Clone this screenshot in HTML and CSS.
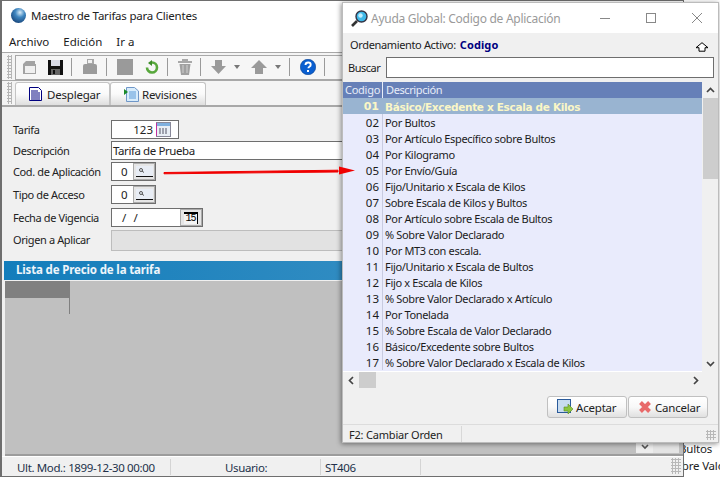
FILE: index.html
```html
<!DOCTYPE html>
<html lang="es">
<head>
<meta charset="utf-8">
<title>Maestro de Tarifas</title>
<link rel="stylesheet" href="styles.css">
</head>
<body>
<div class="desk">
  <div class="behind">
    <div class="behind-line l1">Bultos</div>
    <div class="behind-line l2">Sobre Valor</div>
  </div>

  <section class="main">
    <header class="titlebar">
      <svg class="t-icon" width="17" height="17" viewBox="0 0 17 17"><defs><radialGradient id="g" cx=".6" cy=".3" r=".8"><stop offset="0" stop-color="#d8ecf8"/><stop offset=".4" stop-color="#3f86c0"/><stop offset="1" stop-color="#123c70"/></radialGradient></defs><circle cx="8.500" cy="8.500" r="7.500" fill="url(#g)"/></svg>
      <span class="t-text">Maestro de Tarifas para Clientes</span>
    </header>
    <nav class="menu"><span>Archivo</span><span>Edición</span><span>Ir a</span></nav>

    <div class="toolbar">
      <div class="grip"></div>
      <div class="tools">
        <svg class="ic first" width="15" height="15" viewBox="0 0 15 15"><path d="M1 4 4 1h9v3l1 0v10H1z" fill="#a3a3a3"/><rect x="3" y="6" width="10" height="7" fill="#f0f0f0"/></svg>
        <svg class="ic" width="15" height="15" viewBox="0 0 15 15"><rect width="15" height="15" fill="#111"/><rect x="3" y="0" width="9" height="6" fill="#d9dbe6"/><rect x="3" y="9" width="9" height="6" fill="#666"/><rect x="5" y="10" width="2" height="4" fill="#111"/></svg>
        <i class="sep"></i>
        <svg class="ic" width="16" height="16" viewBox="0 0 16 16"><path d="M5 0h7v6H5z" fill="#a8a8a8"/><path d="M6 1h4v3H6z" fill="#f0f0f0"/><path d="M1 7q0-2 2-2h10q2 0 2 2v8H1z" fill="#9b9b9b"/></svg>
        <i class="sep"></i>
        <svg class="ic" width="16" height="16" viewBox="0 0 16 16"><rect width="16" height="16" fill="#9a9a9a"/></svg>
        <svg class="ic wide" width="14" height="15" viewBox="0 0 14 15"><path d="M7 2.500a5 5 0 1 1-5 5" fill="none" stroke="#58a83c" stroke-width="2.600"/><path d="M7 0v6L3 3z" fill="#3c8c28"/></svg>
        <i class="sep"></i>
        <svg class="ic" width="14" height="16" viewBox="0 0 14 16"><path d="M0 2h14v2H0zM4 0h6v2H4z" fill="#a8a8a8"/><path d="M1.500 5h11L11 16H3z" fill="#a0a0a0"/><path d="M5 6v8M9 6v8" stroke="#d0d0d0"/></svg>
        <i class="sep"></i>
        <svg class="ic" width="15" height="14" viewBox="0 0 15 14"><path d="M4 0h7v6h4l-7.500 8L0 6h4z" fill="#9a9a9a"/></svg>
        <svg class="caret" width="6" height="4" viewBox="0 0 6 4"><path d="M0 0h6L3 4z" fill="#777"/></svg>
        <svg class="ic" width="16" height="14" viewBox="0 0 16 14"><path d="M8 0l8 8h-4v6H4V8H0z" fill="#9a9a9a"/></svg>
        <svg class="caret" width="6" height="4" viewBox="0 0 6 4"><path d="M0 0h6L3 4z" fill="#777"/></svg>
        <i class="sep"></i>
        <svg class="ic" width="16" height="16" viewBox="0 0 16 16"><circle cx="8" cy="8" r="7.700" fill="#0a5fd0" stroke="#073f90" stroke-width=".6"/><path d="M5.500 6q0-2.500 2.700-2.500 2.500 0 2.500 2.200 0 1.300-1.300 2-1 .6-1 1.600" fill="none" stroke="#fff" stroke-width="1.900"/><rect x="7" y="11" width="2" height="2" fill="#fff"/></svg>
        <i class="sep"></i>
      </div>
    </div>

    <div class="tabs">
      <div class="grip short"></div>
      <button class="tab first-tab">
        <svg width="13" height="14" viewBox="0 0 13 14"><path d="M.5.500h9l3 3v10H.500z" fill="#fff" stroke="#000080"/><path d="M2 4h7M2 6h9M2 8h9M2 10h9M2 12h9" stroke="#000080"/></svg>
        <span>Desplegar</span>
      </button>
      <button class="tab second-tab">
        <svg width="15" height="15" viewBox="0 0 15 15"><path d="M2.500.500h8l4 3.500v10.500h-12z" fill="#d8ecfb" stroke="#6f97c8"/><path d="M5 5h7M5 7h7M5 9h7M5 11h7" stroke="#5b9ad8"/><path d="M0 2l4 3-4 3z" fill="#1a8a2a"/></svg>
        <span>Revisiones</span>
      </button>
    </div>

    <div class="content">
      <form class="form">
        <label>Tarifa</label>
        <div class="field w-tarifa num"><span class="val">123</span>
          <svg class="cal" width="16" height="15" viewBox="0 0 16 15"><rect x=".5" y=".5" width="14" height="14" fill="#e8eef5" stroke="#889"/><rect x="1" y="1" width="13" height="3" fill="#7fb0df"/><path d="M3 7h2m1 0h2m1 0h2M3 9h2m1 0h2m1 0h2M3 11h2m1 0h2m1 0h2" stroke="#556"/><rect x="0" y="1" width="1" height="13" fill="#c030a0"/></svg>
        </div>
        <label>Descripción</label>
        <div class="field w-full"><span class="val">Tarifa de Prueba</span></div>
        <label>Cod. de Aplicación</label>
        <div class="field w-code"><span class="val code">0</span><span class="lookup"><svg width="17" height="11" viewBox="0 0 17 11"><rect width="17" height="10" fill="#e8edf5"/><circle cx="5" cy="4" r="1.500" fill="none" stroke="#555"/><path d="M6 5l2 1.500" stroke="#555"/><path d="M0 10.500h17" stroke="#111"/></svg></span></div>
        <label>Tipo de Acceso</label>
        <div class="field w-code"><span class="val code">0</span><span class="lookup"><svg width="17" height="11" viewBox="0 0 17 11"><rect width="17" height="10" fill="#e8edf5"/><circle cx="5" cy="4" r="1.500" fill="none" stroke="#555"/><path d="M6 5l2 1.500" stroke="#555"/><path d="M0 10.500h17" stroke="#111"/></svg></span></div>
        <label>Fecha de Vigencia</label>
        <div class="field w-date"><span class="val date">/ /</span><span class="lookup small"><span class="cal15">15</span></span></div>
        <label>Origen a Aplicar</label>
        <div class="field w-full off"></div>
      </form>

      <div class="list-head">Lista de Precio de la tarifa</div>
      <div class="list-body">
        <div class="grid-corner"></div>
        <div class="grid-line"></div>
        <div class="grid-scroll"><span class="scroll-btn"><svg width="8" height="6" viewBox="0 0 8 6"><path d="M1 1l3 3 3-3" fill="none" stroke="#555" stroke-width="1.600"/></svg></span><span class="scroll-rest"></span></div>
      </div>
    </div>

    <footer class="status">
      <span class="s1">Ult. Mod.: 1899-12-30 00:00</span>
      <span class="s2">Usuario:</span>
      <span class="s3">ST406</span>
      <span class="s4"></span>
      <span class="sizer"></span>
    </footer>
  </section>

  <section class="dialog">
    <header class="d-title">
      <svg width="17" height="17" viewBox="0 0 17 17"><path d="M6 11l-5 5" stroke="#333" stroke-width="2.600"/><circle cx="10.500" cy="6.500" r="5.500" fill="#3fb8e8" stroke="#334" stroke-width="1.400"/><circle cx="9.500" cy="5.500" r="2.200" fill="#bfeeff"/></svg>
      <span class="d-name">Ayuda Global: Codigo de Aplicación</span>
      <div class="d-win">
        <svg width="10" height="10" viewBox="0 0 10 10"><path d="M0 5.500h10" stroke="#888"/></svg>
        <svg width="10" height="10" viewBox="0 0 10 10"><rect x=".5" y=".5" width="9" height="9" fill="none" stroke="#888"/></svg>
        <svg width="10" height="10" viewBox="0 0 10 10"><path d="M0 0l10 10M10 0L0 10" stroke="#888"/></svg>
      </div>
    </header>
    <div class="d-sort">
      <span>Ordenamiento Activo:</span><b>Codigo</b>
      <svg class="sort-up" width="14" height="10" viewBox="0 0 14 10"><path d="M7 .7l6 5H10v3.500H4V5.700H1z" fill="#fff" stroke="#000"/></svg>
    </div>
    <div class="d-search"><label>Buscar</label><div class="d-input"></div></div>
    <div class="d-grid">
      <div class="table">
        <div class="thead"><span class="c1">Codigo</span><span class="c2">Descripción</span></div>
        <div class="row sel"><span class="c1">01</span><span class="c2">Básico/Excedente x Escala de Kilos</span></div>
        <div class="row"><span class="c1">02</span><span class="c2">Por Bultos</span></div>
        <div class="row"><span class="c1">03</span><span class="c2">Por Artículo Específico sobre Bultos</span></div>
        <div class="row"><span class="c1">04</span><span class="c2">Por Kilogramo</span></div>
        <div class="row"><span class="c1">05</span><span class="c2">Por Envío/Guía</span></div>
        <div class="row"><span class="c1">06</span><span class="c2">Fijo/Unitario x Escala de Kilos</span></div>
        <div class="row"><span class="c1">07</span><span class="c2">Sobre Escala de Kilos y Bultos</span></div>
        <div class="row"><span class="c1">08</span><span class="c2">Por Artículo sobre Escala de Bultos</span></div>
        <div class="row"><span class="c1">09</span><span class="c2">% Sobre Valor Declarado</span></div>
        <div class="row"><span class="c1">10</span><span class="c2">Por MT3 con escala.</span></div>
        <div class="row"><span class="c1">11</span><span class="c2">Fijo/Unitario x Escala de Bultos</span></div>
        <div class="row"><span class="c1">12</span><span class="c2">Fijo x Escala de Kilos</span></div>
        <div class="row"><span class="c1">13</span><span class="c2">% Sobre Valor Declarado x Artículo</span></div>
        <div class="row"><span class="c1">14</span><span class="c2">Por Tonelada</span></div>
        <div class="row"><span class="c1">15</span><span class="c2">% Sobre Escala de Valor Declarado</span></div>
        <div class="row"><span class="c1">16</span><span class="c2">Básico/Excedente sobre Bultos</span></div>
        <div class="row"><span class="c1">17</span><span class="c2">% Sobre Valor Declarado x Escala de Kilos</span></div>
      </div>
      <div class="vscroll">
        <span class="v-arrow"><svg width="9" height="6" viewBox="0 0 9 6"><path d="M1 5l3.500-3.500L8 5" fill="none" stroke="#444" stroke-width="1.700"/></svg></span>
        <span class="v-thumb"></span>
        <span class="v-arrow end"><svg width="9" height="6" viewBox="0 0 9 6"><path d="M1 1l3.500 3.500L8 1" fill="none" stroke="#444" stroke-width="1.700"/></svg></span>
      </div>
    </div>
    <div class="hscroll">
      <svg width="6" height="9" viewBox="0 0 6 9"><path d="M5 1L1.500 4.500 5 8" fill="none" stroke="#444" stroke-width="1.700"/></svg>
      <span class="h-thumb"></span>
      <svg class="h-end" width="6" height="9" viewBox="0 0 6 9"><path d="M1 1l3.500 3.500L1 8" fill="none" stroke="#444" stroke-width="1.700"/></svg>
    </div>
    <div class="d-actions">
      <button class="d-btn">
        <svg width="16" height="16" viewBox="0 0 16 16"><rect x=".5" y=".5" width="13" height="13" fill="#c8dcf0" stroke="#2a5a9a"/><path d="M7 8h4V5l5 5-5 5v-3H7z" fill="#8cc63f" stroke="#5a8a20" stroke-width=".6"/></svg>
        <span>Aceptar</span>
      </button>
      <button class="d-btn">
        <svg width="14" height="14" viewBox="0 0 14 14"><path d="M2.500 2.500l9 9M11.500 2.500l-9 9" stroke="#e86a6a" stroke-width="4"/></svg>
        <span>Cancelar</span>
      </button>
    </div>
    <footer class="d-status"><span class="ds1">F2: Cambiar Orden</span><span class="sizer"></span></footer>
  </section>

  <svg class="arrow" width="196" height="12" viewBox="0 0 196 12"><path d="M1 7.500 175 5.200v1.800L1 8.800z" fill="#f00000" stroke="#f00000" stroke-linejoin="round"/><path d="M176 1.500l16 4-16 4z" fill="#f00000"/></svg>
</div>
</body>
</html>
```

FILE: styles.css
```css
* { box-sizing: border-box; }
html, body { margin: 0; padding: 0; }
body { width: 720px; height: 477px; overflow: hidden; font-family: "Noto Sans", "Open Sans", sans-serif; font-size: 11px; color: #1b1b1b; }
.desk { position: relative; width: 720px; height: 477px; overflow: hidden; background: #fff; }

.behind-line { position: absolute; font-size: 11.500px; letter-spacing: -.2px; white-space: nowrap; color: #222; }
.l1 { left: 679px; top: 441px; }
.l2 { left: 669px; top: 458px; }

.main { position: absolute; left: 0; top: 0; width: 684px; height: 477px; display: flex; flex-direction: column; background: #f0f0f0; border: 1px solid #6e6e6e; border-width: 1px 1px 1px 2px; }
.titlebar { height: 29px; display: flex; align-items: center; gap: 4px; padding-left: 8px; background: #fff; font-size: 11.500px; letter-spacing: -.22px; }
.t-text { color: #222; }
.menu { height: 22px; display: flex; align-items: center; gap: 14px; padding-left: 7px; background: #fff; font-size: 11.500px; }

.toolbar { height: 29px; display: flex; align-items: center; border-top: 1px solid #a8a8a8; border-bottom: 1px solid #a8a8a8; padding-left: 5px; padding-top: 1px; background: #f4f4f4; }
.grip { width: 5px; height: 24px; margin-right: 3px; background-image: radial-gradient(#b5b5b5 1px, transparent 1.200px); background-size: 3px 3px; }
.grip.short { height: 22px; }
.tools { flex: 1; height: 25px; display: flex; align-items: center; border: 1px solid #a8a8a8; border-right: 0; background: #f6f6f6; }
.ic { margin-left: 11px; flex: none; }
.ic.first { margin-left: 6px; }
.ic.wide { margin-left: 12px; }
.sep + .ic { margin-left: 10.500px; }
.caret { margin-left: 8px; flex: none; }
.sep { width: 1px; height: 18px; margin-left: 7.500px; background: #9a9a9a; flex: none; }

.tabs { height: 26px; display: flex; align-items: flex-end; padding-left: 5px; border-bottom: 2px solid #a8a8a8; background: #f4f4f4; }
.tabs .grip { margin-right: 3px; align-self: center; }
.tab { height: 23px; display: flex; align-items: center; gap: 5px; padding: 0; font: inherit; font-size: 11.500px; letter-spacing: -.2px; color: #222; border: 1px solid #c4c4c4; border-bottom: 0; border-radius: 3px 3px 0 0; background: linear-gradient(#fff, #fafafa 50%, #dedede); }
.first-tab { width: 95px; padding-left: 13px; }
.second-tab { width: 96px; padding-left: 13px; gap: 3px; margin-left: 0; }

.content { flex: 1; min-height: 0; display: flex; flex-direction: column; }
.form { display: grid; grid-template-columns: 98px 1fr; grid-template-rows: 21px 21px 23px 23px 22px 22px; padding: 13px 0 0 11px; font-size: 11px; letter-spacing: -.38px; }
.form label { align-self: start; padding-top: 2px; color: #222; white-space: nowrap; }
.field { height: 19px; display: flex; align-items: center; background: #fff; border: 1px solid #6e6e6e; }
.w-tarifa { width: 68px; }
.w-full { width: 560px; }
.w-code { width: 45px; }
.w-date { width: 92px; }
.off { height: 21px; background: #e2e2e2; border-color: #bdbdbd; }
.val { padding-left: 1px; font-size: 11.500px; letter-spacing: -.42px; color: #222; }
.num .val { width: 41px; text-align: right; letter-spacing: 0; }
.cal { margin-left: 3px; }
.code { width: 21px; padding-left: 9px; }
.date { width: 68px; padding-left: 10px; word-spacing: 5px; }
.lookup { width: 22px; height: 17px; margin-left: auto; display: flex; align-items: center; justify-content: center; background: #e6e6e6; border: 1px solid #ababab; }
.lookup.small { width: 22px; height: 17px; }
.cal15 { width: 14px; height: 12px; font: 10px/10px "Liberation Mono", monospace; color: #000; text-align: center; border-top: 2px solid #000; border-right: 1px solid #000; background: #f4f4f4; letter-spacing: -1px; }

.list-head { height: 19px; margin: 9px 0 0 2px; padding-left: 12px; font-weight: 700; font-size: 11.500px; letter-spacing: -.15px; line-height: 18px; color: #eef5fa; background: linear-gradient(90deg, #137dbb, #4c9ac8); }
.list-body { position: relative; flex: 1; margin: 1px 0 0 3px; background: #c0c0c0; border-bottom: 2px solid #9c9c9c; }
.grid-corner { width: 65px; height: 17px; background: #808080; }
.grid-line { width: 65px; height: 16px; border-right: 1px solid #808080; }
.grid-scroll { position: absolute; left: 631px; bottom: 1px; display: flex; height: 13px; }
.scroll-btn { width: 17px; display: flex; align-items: center; justify-content: center; background: #ededed; }
.scroll-rest { width: 26px; background: #e4e4e4; }

.status { position: relative; height: 20px; display: flex; align-items: center; border-top: 1px solid #fff; background: #f0f0f0; font-size: 11.500px; letter-spacing: -.37px; }
.status span { height: 16px; line-height: 17px; color: #22304a; }
.s1 { width: 169px; padding-left: 15px; border-right: 1px solid #d4d4d4; }
.s2 { width: 150px; padding-left: 54px; border-right: 1px solid #d4d4d4; }
.s3 { width: 100px; padding-left: 4px; border-right: 1px solid #d4d4d4; }
.s4 { flex: 1; }
.sizer { position: absolute; right: 2px; bottom: 2px; width: 10px; height: 10px; background-image: radial-gradient(#b8b8b8 1px, transparent 1.200px); background-size: 3px 3px; }

.dialog { position: absolute; left: 342px; top: 2px; width: 377px; height: 441px; display: flex; flex-direction: column; background: #f0f0f0; border: 1px solid #bcbcbc; box-shadow: -1px 1px 5px rgba(0,0,0,.45); }
.d-title { height: 30px; display: flex; align-items: center; gap: 3px; padding-left: 8px; background: #fff; font-size: 12px; color: #9a9a9a; }
.d-name { letter-spacing: -.27px; }
.d-win { margin-left: auto; display: flex; gap: 36px; padding-right: 16px; }
.d-sort { position: relative; height: 24px; display: flex; align-items: center; gap: 4px; padding: 0 0 2px 7px; font-size: 11px; letter-spacing: -.35px; color: #222; }
.d-sort b { color: #000080; letter-spacing: .1px; }
.sort-up { position: absolute; right: 9px; top: 9px; }
.d-search { height: 25px; display: flex; align-items: flex-start; gap: 4px; padding-left: 5px; font-size: 11px; letter-spacing: -.5px; }
.d-search label { padding-top: 3px; width: 34px; }
.d-input { width: 328px; height: 21px; background: #fff; border: 1px solid #6e6e6e; }
.d-grid { height: 290px; display: flex; }
.table { width: 360px; background: #e9ebfc; border-bottom: 1px solid #fff; }
.thead { height: 16px; display: flex; background: #6680b8; color: #e8edf8; font-size: 11px; line-height: 16px; letter-spacing: -.25px; white-space: nowrap; }
.thead .c1 { width: 40px; padding-left: 2px; border-right: 1px solid #e8edf8; }
.thead .c2 { padding-left: 3px; letter-spacing: -.4px; }
.row { height: 16px; display: flex; font-size: 11px; line-height: 17px; letter-spacing: -.33px; white-space: nowrap; }
.row .c1 { width: 40px; padding-right: 3px; text-align: right; font-size: 11.500px; letter-spacing: 0; border-right: 1px solid #c8cbe0; }
.row .c2 { padding-left: 2px; }
.row.sel { background: #99b4d1; color: #fbf7c6; font-weight: 700; font-family: "DejaVu Sans", sans-serif; font-size: 10.500px; line-height: 18px; letter-spacing: -.32px; }
.row.sel .c1 { font-size: 11px; border-right-color: #99b4d1; }
.vscroll { width: 15px; display: flex; flex-direction: column; margin-left: 1px; }
.v-arrow { height: 16px; display: flex; align-items: center; justify-content: center; flex: none; }
.v-arrow.end { margin-top: auto; }
.v-thumb { height: 81px; background: #cdcdcd; }
.hscroll { height: 16px; display: flex; align-items: center; padding-left: 5px; }
.h-thumb { width: 17px; height: 16px; margin-left: 5px; background: #cdcdcd; }
.h-end { margin-left: auto; margin-right: 19px; }
.d-actions { height: 36px; display: flex; align-items: flex-start; justify-content: flex-end; gap: 1px; padding: 8px 10px 0 0; }
.d-btn { width: 80px; height: 22px; display: flex; align-items: center; gap: 3px; padding: 0 0 0 9px; font: inherit; font-size: 11.500px; letter-spacing: -.2px; color: #222; border: 1px solid #c0c0c0; border-radius: 3px; background: linear-gradient(#fff, #f8f8f8 50%, #e0e0e0); }
.d-status { position: relative; flex: 1; display: flex; align-items: center; border-top: 1px solid #dcdcdc; font-size: 11px; letter-spacing: -.2px; color: #222; }
.ds1 { width: 119px; height: 16px; line-height: 17px; padding-left: 6px; border-right: 1px solid #d8d8d8; }

.arrow { position: absolute; left: 163px; top: 165px; }
```
